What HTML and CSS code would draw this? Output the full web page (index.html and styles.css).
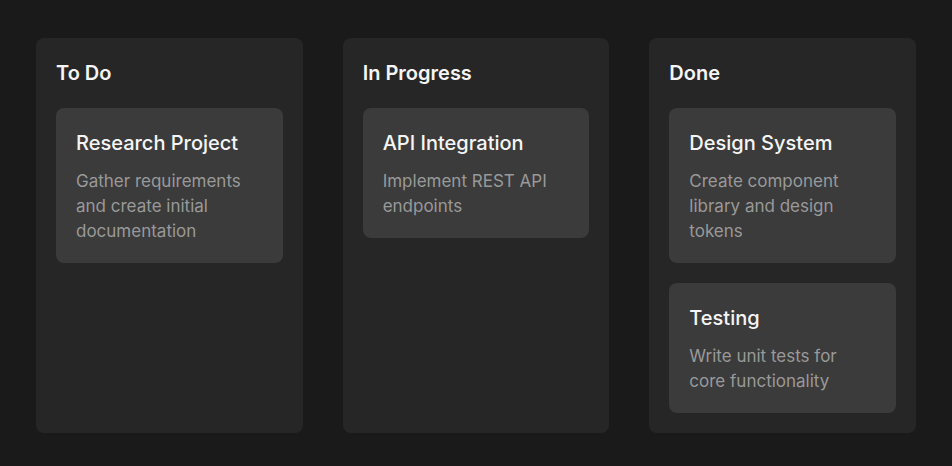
FILE: index.html
```html
<!DOCTYPE html>
<html lang="en">
<head>
<meta charset="utf-8">
<title>Kanban Board</title>
<link rel="stylesheet" href="styles.css">
</head>
<body>
<main class="board">
  <section class="column">
    <h2 class="column-title">To Do</h2>
    <div class="cards">
      <article class="card">
        <h3 class="card-title">Research Project</h3>
        <p class="card-desc">Gather requirements and create initial documentation</p>
      </article>
    </div>
  </section>
  <section class="column">
    <h2 class="column-title">In Progress</h2>
    <div class="cards">
      <article class="card">
        <h3 class="card-title">API Integration</h3>
        <p class="card-desc">Implement REST API endpoints</p>
      </article>
    </div>
  </section>
  <section class="column">
    <h2 class="column-title">Done</h2>
    <div class="cards">
      <article class="card">
        <h3 class="card-title">Design System</h3>
        <p class="card-desc">Create component library and design tokens</p>
      </article>
      <article class="card">
        <h3 class="card-title">Testing</h3>
        <p class="card-desc">Write unit tests for core functionality</p>
      </article>
    </div>
  </section>
</main>
</body>
</html>
```
FILE: styles.css
```css
* { box-sizing: border-box; }
html, body { margin: 0; padding: 0; }
body {
  background: #1a1a1a;
  font-family: Inter, "Noto Sans", sans-serif;
  color: #f5f5f5;
}
.board {
  display: grid;
  grid-template-columns: repeat(3, 1fr);
  gap: 40px;
  padding: 38px 36px 33px;
  min-height: 466px;
}
.column {
  background: #262626;
  border-radius: 8px;
  padding: 21px 20px 20px;
}
.column-title {
  margin: 0 0 21px;
  font-size: 20px;
  line-height: 28px;
  font-weight: 600;
}
.cards {
  display: flex;
  flex-direction: column;
  gap: 20px;
}
.card {
  background: #3b3b3b;
  border-radius: 8px;
  padding: 21px 20px 19px;
}
.card-title {
  margin: 0 0 12px;
  font-size: 20px;
  line-height: 28px;
  font-weight: 500;
}
.card-desc {
  margin: 0;
  font-size: 17px;
  line-height: 25px;
  color: #999999;
}
```
